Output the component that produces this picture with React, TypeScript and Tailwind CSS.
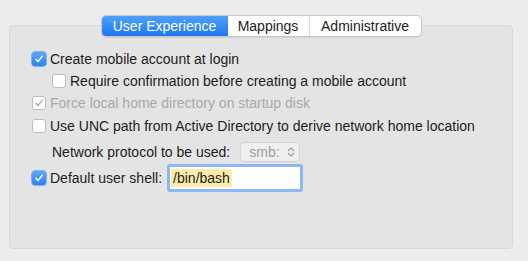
import React from "react";

// small mac-style checkbox
type CheckProps = { checked?: boolean; disabled?: boolean };

const Check: React.FC<CheckProps> = ({ checked, disabled }) => {
    if (checked && !disabled) {
        return (
            <span className="flex h-[14px] w-[14px] shrink-0 items-center justify-center rounded-[3px] bg-gradient-to-b from-[#5aa6fb] to-[#2b84f4] shadow-[0_0_0_0.5px_#2a78e0]">
                <svg width="10" height="10" viewBox="0 0 10 10" fill="none">
                    <path d="M2 5.3 L4 7.6 L8.2 2.2" stroke="white" strokeWidth="1.5" strokeLinecap="round" strokeLinejoin="round" />
                </svg>
            </span>
        );
    }
    return (
        <span className="flex h-[14px] w-[14px] shrink-0 items-center justify-center rounded-[3px] border border-[#bdbdbd] bg-white">
            {checked && (
                <svg width="10" height="10" viewBox="0 0 10 10" fill="none">
                    <path d="M2 5.3 L4 7.6 L8.2 2.2" stroke="#a9a9a9" strokeWidth="1.3" strokeLinecap="round" strokeLinejoin="round" />
                </svg>
            )}
        </span>
    );
};

const Row: React.FC<{ children: React.ReactNode; className?: string }> = ({ children, className }) => (
    <div className={`flex items-center gap-[4px] ${className ?? ""}`}>{children}</div>
);

const App: React.FC = () => {
    return (
        <div
            className="h-[261px] w-[528px] bg-[#ececec] pl-[9px] text-[14px] leading-[16px] text-[#1c1c1c]"
            style={{ fontFamily: '"Liberation Sans", Arial, sans-serif' }}
        >
            <div className="flex w-[504px] flex-col items-center">
                {/* tabs */}
                <div className="relative z-10 mt-[15px] flex h-[22px] overflow-hidden rounded-[5px] border border-[#c8c8c8] bg-white shadow-[0_1px_1px_rgba(0,0,0,0.08)]">
                    <div className="flex w-[126px] items-center justify-center bg-gradient-to-b from-[#4fa0fa] to-[#1b77f1] text-white">
                        User Experience
                    </div>
                    <div className="flex w-[82px] items-center justify-center border-r border-[#d6d6d6]">Mappings</div>
                    <div className="flex w-[111px] items-center justify-center">Administrative</div>
                </div>

                {/* panel */}
                <div className="-mt-[12px] flex h-[224px] w-[504px] flex-col rounded-[4px] border border-[#d8d8d8] bg-[#e4e4e4] pl-[22px] pt-[25px]">
                    <Row>
                        <Check checked />
                        <span>Create mobile account at login</span>
                    </Row>
                    <Row className="ml-[20px] mt-[6px]">
                        <Check />
                        <span>Require confirmation before creating a mobile account</span>
                    </Row>
                    <Row className="mt-[6px]">
                        <Check checked disabled />
                        <span className="text-[#a9a9a9]">Force local home directory on startup disk</span>
                    </Row>
                    <Row className="mt-[7px]">
                        <Check />
                        <span>Use UNC path from Active Directory to derive network home location</span>
                    </Row>
                    <div className="ml-[20px] mt-[8px] flex items-center gap-[10px]">
                        <span>Network protocol to be used:</span>
                        <div className="flex h-[20px] w-[60px] items-center justify-between rounded-[4px] border border-[#d3d3d3] bg-[#efefef] pl-[8px] pr-[4px] text-[#9d9d9d]">
                            <span>smb:</span>
                            <svg width="8" height="12" viewBox="0 0 8 12" fill="none">
                                <path d="M1.5 4.5 L4 2 L6.5 4.5 M1.5 7.5 L4 10 L6.5 7.5" stroke="#a0a0a0" strokeWidth="1.2" strokeLinecap="round" strokeLinejoin="round" />
                            </svg>
                        </div>
                    </div>
                    <div className="mt-[2px] flex items-center">
                        <Check checked />
                        <span className="ml-[4px]">Default user shell:</span>
                        <div className="ml-[5px] flex h-[28px] w-[136px] items-center rounded-[3px] border-[3px] border-[#8cb8f3] bg-white pl-[1px]">
                            <span className="bg-[#fcecaa] px-[2px] leading-[18px]">/bin/bash</span>
                        </div>
                    </div>
                </div>
            </div>
        </div>
    );
};

export default App;
